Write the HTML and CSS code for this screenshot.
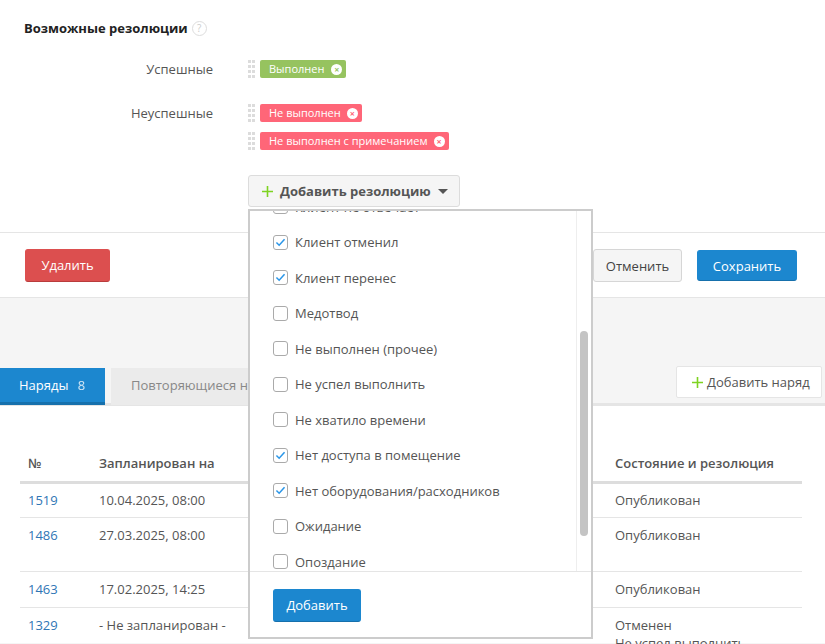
FILE: index.html
```html
<!DOCTYPE html>
<html lang="ru">
<head>
<meta charset="utf-8">
<title>Возможные резолюции</title>
<link rel="stylesheet" href="styles.css">
</head>
<body>
<div class="page">
  <section class="card">
    <div class="card-body">
      <h2 class="heading">Возможные резолюции <span class="help">?</span></h2>
      <div class="res-row res-row-ok">
        <div class="res-label">Успешные</div>
        <div class="res-tags">
          <div class="tag-line"><span class="grip"></span><span class="tag tag-green">Выполнен<span class="tag-x">×</span></span></div>
        </div>
      </div>
      <div class="res-row res-row-bad">
        <div class="res-label">Неуспешные</div>
        <div class="res-tags">
          <div class="tag-line"><span class="grip"></span><span class="tag tag-red">Не выполнен<span class="tag-x">×</span></span></div>
          <div class="tag-line"><span class="grip"></span><span class="tag tag-red">Не выполнен с примечанием<span class="tag-x">×</span></span></div>
        </div>
      </div>
      <div class="add-wrap">
        <button class="add-res"><svg class="plus" viewBox="0 0 11 11"><path d="M5.5 0v11M0 5.5h11"/></svg>Добавить резолюцию<span class="caret"></span></button>
        <div class="popup">
          <div class="popup-scroll">
            <ul class="opts">
              <li class="opt"><span class="cb"></span>Клиент не отвечает</li>
              <li class="opt"><span class="cb on"><svg viewBox="0 0 12 10"><path d="M1.5 5l3 3 6-6.5"/></svg></span>Клиент отменил</li>
              <li class="opt"><span class="cb on"><svg viewBox="0 0 12 10"><path d="M1.5 5l3 3 6-6.5"/></svg></span>Клиент перенес</li>
              <li class="opt"><span class="cb"></span>Медотвод</li>
              <li class="opt"><span class="cb"></span>Не выполнен (прочее)</li>
              <li class="opt"><span class="cb"></span>Не успел выполнить</li>
              <li class="opt"><span class="cb"></span>Не хватило времени</li>
              <li class="opt"><span class="cb on"><svg viewBox="0 0 12 10"><path d="M1.5 5l3 3 6-6.5"/></svg></span>Нет доступа в помещение</li>
              <li class="opt"><span class="cb on"><svg viewBox="0 0 12 10"><path d="M1.5 5l3 3 6-6.5"/></svg></span>Нет оборудования/расходников</li>
              <li class="opt"><span class="cb"></span>Ожидание</li>
              <li class="opt"><span class="cb"></span>Опоздание</li>
            </ul>
            <div class="track"><div class="thumb"></div></div>
          </div>
          <div class="popup-foot"><button class="btn btn-blue btn-add">Добавить</button></div>
        </div>
      </div>
    </div>
    <div class="card-foot">
      <button class="btn btn-red">Удалить</button>
      <div class="foot-right">
        <button class="btn btn-gray">Отменить</button>
        <button class="btn btn-blue btn-save">Сохранить</button>
      </div>
    </div>
  </section>

  <div class="tabs">
    <div class="tab tab-active">Наряды <span class="count">8</span></div>
    <div class="tab tab-rest">Повторяющиеся наряды</div>
    <button class="add-order"><svg class="plus" viewBox="0 0 11 11"><path d="M5.5 0v11M0 5.5h11"/></svg>Добавить наряд</button>
  </div>

  <section class="panel">
    <table class="orders">
      <thead>
        <tr><th class="c1">№</th><th class="c2">Запланирован на</th><th class="c3">Состояние и резолюция</th></tr>
      </thead>
      <tbody>
        <tr class="first"><td><a href="#">1519</a></td><td>10.04.2025, 08:00</td><td>Опубликован</td></tr>
        <tr class="tall"><td><a href="#">1486</a></td><td>27.03.2025, 08:00</td><td>Опубликован</td></tr>
        <tr class="third"><td><a href="#">1463</a></td><td>17.02.2025, 14:25</td><td>Опубликован</td></tr>
        <tr><td><a href="#">1329</a></td><td>- Не запланирован -</td><td>Отменен<br>Не успел выполнить</td></tr>
      </tbody>
    </table>
  </section>
</div>
</body>
</html>
```

FILE: styles.css
```css
* { box-sizing: border-box; }
html, body { margin: 0; height: 644px; overflow: hidden; }
body { background: #f5f5f5; font-family: "Open Sans", sans-serif; font-size: 13px; color: #555; }
button { font-family: inherit; cursor: pointer; }
.page { width: 825px; }

.card { background: #fff; height: 298px; border-bottom: 1px solid #e5e5e5; }
.card-body { height: 233px; padding: 18px 0 0 24px; border-bottom: 1px solid #e5e5e5; }
.heading { margin: 0; font-size: 13px; line-height: 20px; font-weight: 700; color: #222; display: flex; align-items: center; gap: 4px; }
.help { width: 15px; height: 15px; border: 1px solid #ddd; border-radius: 50%; font-size: 10px; font-weight: 400; color: #ccc; display: flex; align-items: center; justify-content: center; }

.res-row { display: flex; }
.res-row-ok { margin-top: 22px; }
.res-row-bad { margin-top: 26px; }
.res-label { width: 189px; text-align: right; line-height: 18px; color: #555; }
.res-tags { margin-left: 35px; display: flex; flex-direction: column; gap: 10px; }
.tag-line { display: flex; height: 18px; }
.grip { width: 7px; height: 18px; margin-right: 5px; background: repeating-linear-gradient(to bottom, #dcdcdc 0 3px, transparent 3px 5px); -webkit-mask: linear-gradient(to right, #000 0 3px, transparent 3px 4px, #000 4px 7px); mask: linear-gradient(to right, #000 0 3px, transparent 3px 4px, #000 4px 7px); }
.tag { height: 18px; padding: 0 4px 0 9px; border-radius: 2px; color: #fff; font-size: 11px; font-weight: 500; line-height: 18px; display: flex; align-items: center; }
.tag-green { background: #96c35f; }
.tag-red { background: #ff6678; }
.tag-x { width: 11px; height: 11px; margin-left: 6px; border-radius: 50%; background: #fff; font-size: 9px; line-height: 11px; text-align: center; font-weight: 700; }
.tag-green .tag-x { margin-left: 7px; color: #96c35f; }
.tag-red .tag-x { color: #ff6678; }

.add-wrap { position: relative; margin: 25px 0 0 224px; width: 212px; }
.add-res { width: 212px; height: 32px; padding: 0 0 0 13px; background: #f5f5f5; border: 1px solid #dcdcdc; border-radius: 3px; font-size: 13px; font-weight: 700; color: #555; display: flex; align-items: center; }
.plus { width: 11px; height: 11px; margin-right: 7px; flex: none; }
.plus path { stroke: #7ed321; stroke-width: 1.6; fill: none; }
.caret { margin-left: 7px; border-left: 5px solid transparent; border-right: 5px solid transparent; border-top: 5px solid #555; }

.popup { position: absolute; left: 0; top: 34px; width: 345px; height: 430px; background: #fff; border: 2px solid #ccc; z-index: 5; display: flex; flex-direction: column; }
.popup-scroll { position: relative; height: 361px; overflow: hidden; border-bottom: 1px solid #e5e5e5; flex: none; }
.opts { list-style: none; margin: -22px 0 0; padding: 0 0 0 23px; }
.opt { height: 35.5px; display: flex; align-items: center; gap: 7px; font-size: 13px; color: #555; }
.cb { width: 15px; height: 15px; border: 1px solid #aaa; border-radius: 3px; flex: none; display: flex; align-items: center; justify-content: center; background: #fff; }
.cb svg { width: 11px; height: 9px; }
.cb path { stroke: #2a96e8; stroke-width: 1.7; fill: none; }
.track { position: absolute; right: 0; top: 0; bottom: 0; width: 15px; border-left: 1px solid #eee; background: #fff; }
.thumb { position: absolute; left: 3px; top: 120px; width: 8px; height: 205px; background: #c4c4c4; border-radius: 4px; }
.popup-foot { padding: 17px 0 0 23px; }

.btn { height: 33px; border-radius: 3px; font-size: 13px; border: 1px solid transparent; padding: 0; }
.btn-blue { background: #1c87cf; border-color: #1c87cf; border-bottom-color: #1670ac; color: #fff; font-weight: 500; }
.btn-add { width: 88px; padding-bottom: 2px; }
.btn-red { width: 85px; padding-bottom: 2px; background: #dc4f4f; border-color: #dc4f4f; border-bottom-color: #b93c3c; color: #fff; font-weight: 500; }
.btn-gray { width: 89px; background: #f5f5f5; border-color: #d6d6d6; color: #444; }
.btn-save { width: 100px; height: 31px; }
.card-foot { display: flex; align-items: flex-start; justify-content: space-between; padding: 16px 28px 0 25px; }
.foot-right { display: flex; align-items: center; gap: 15px; }

.tabs { position: relative; z-index: 1; display: flex; gap: 6px; margin-top: 70px; height: 37px; }
.tab { height: 37px; font-size: 13px; line-height: 35px; }
.tab-active { width: 105px; padding-left: 19px; background: #1c87cf; border-bottom: 3px solid #1670ac; color: #fff; }
.count { margin-left: 6px; opacity: .8; }
.tab-rest { width: 400px; padding-left: 20px; background: #ebebeb; color: #888; }
.add-order { position: absolute; right: 3px; top: -2px; width: 146px; height: 32px; background: #fff; border: 1px solid #e5e5e5; border-radius: 2px; padding: 0 0 0 15px; font-size: 13px; color: #555; display: flex; align-items: center; }
.add-order .plus { margin-right: 4px; }

.panel { background: #fff; height: 240px; margin-top: -2px; border-top: 3px solid #e5e5e5; padding: 39px 23px 0 20px; }
.orders { width: 782px; table-layout: fixed; border-collapse: collapse; }
.c1 { width: 71px; }
.c3 { width: 195px; }
.orders th { text-align: left; padding: 0 8px; height: 37px; vertical-align: middle; font-weight: 600; color: #555; border-bottom: 3px solid #ddd; }
.orders td { padding: 8px; line-height: 18px; vertical-align: top; color: #555; border-bottom: 1px solid #e5e5e5; }
.orders tr.first td { padding-top: 7px; }
.orders tr.tall td { height: 54px; }
.orders tr.third td { padding-bottom: 9px; }
.orders a { color: #2f76b5; text-decoration: none; }
```
